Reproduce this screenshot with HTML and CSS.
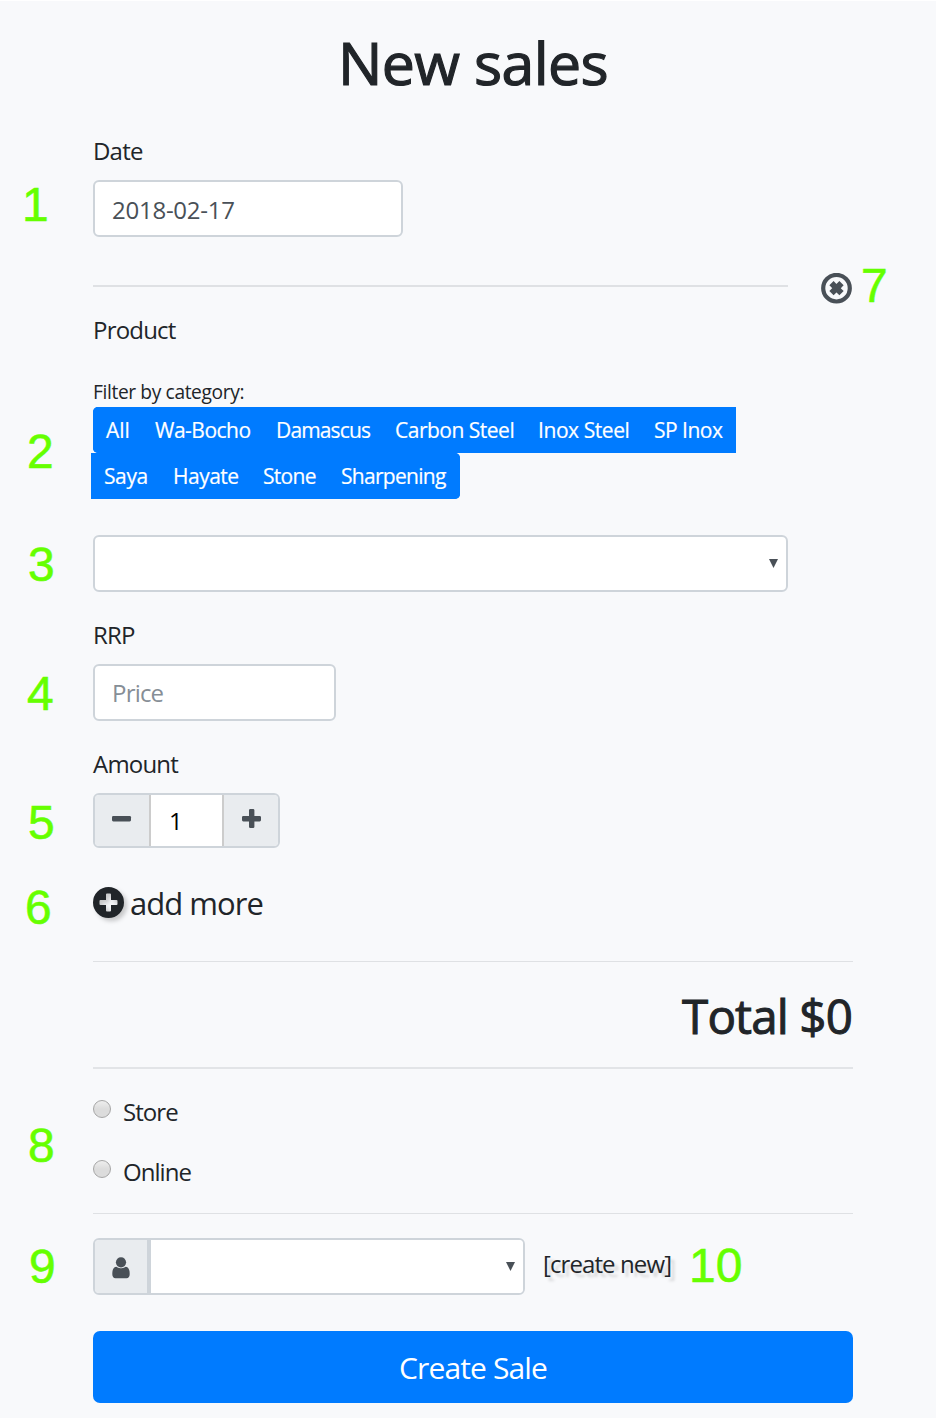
FILE: index.html
```
<!DOCTYPE html>
<html lang="en">
<head>
<meta charset="utf-8">
<title>New sales</title>
<link rel="stylesheet" href="styles.css">
</head>
<body>
<main class="page">
  <h1 class="title">New sales</h1>
  <section class="field date-field">
    <label class="label" for="date">Date</label>
    <input class="control date" id="date" type="text" value="2018-02-17">
    <span class="mark m1">1</span>
  </section>
  <section class="product">
    <div class="product-head">
      <hr class="rule-short">
      <svg class="remove" viewBox="0 0 32 32" role="img" aria-label="Remove"><circle cx="15.500" cy="15.200" r="13.300" fill="none" stroke="#495057" stroke-width="4.200"/><path d="M12.600 12.300L18.400 18.100M18.400 12.300L12.600 18.100" stroke="#495057" stroke-width="6" stroke-linecap="square"/></svg>
      <span class="mark m7">7</span>
    </div>
    <h2 class="label">Product</h2>
    <div class="filter-label">Filter by category:</div>
    <div class="filters">
      <div class="filter-row first"><button class="chip c1">All</button><button class="chip c2">Wa-Bocho</button><button class="chip c3">Damascus</button><button class="chip c4">Carbon Steel</button><button class="chip c5">Inox Steel</button><button class="chip c6">SP Inox</button></div>
      <div class="filter-row second"><button class="chip c7">Saya</button><button class="chip c8">Hayate</button><button class="chip c9">Stone</button><button class="chip c10">Sharpening</button></div>
      <span class="mark m2">2</span>
    </div>
    <div class="control select">
      <svg class="caret" viewBox="0 0 9 9"><path d="M0 0H9L4.500 9Z" fill="#495057"/></svg>
      <span class="mark m3">3</span>
    </div>
  </section>
  <section class="field price-field">
    <label class="label" for="price">RRP</label>
    <input class="control price" id="price" type="text" placeholder="Price">
    <span class="mark m4">4</span>
  </section>
  <section class="field amount-field">
    <label class="label" for="qty">Amount</label>
    <div class="stepper">
      <button class="addon" aria-label="Less"><svg class="sign" viewBox="0 0 20 20"><rect x="0" y="7" width="19" height="5.400" rx="1.300" fill="#495057"/></svg></button>
      <input class="qty" id="qty" type="text" value="1">
      <button class="addon plus" aria-label="More"><svg class="sign" viewBox="0 0 20 20"><path d="M8.300 0h2.800a1.300 1.300 0 0 1 1.300 1.300V7h5.300A1.300 1.300 0 0 1 19 8.300v2.800a1.300 1.300 0 0 1-1.300 1.300H12.400v5.300a1.300 1.300 0 0 1-1.300 1.300H8.300A1.300 1.300 0 0 1 7 17.700V12.400H1.300A1.300 1.300 0 0 1 0 11.100V8.300A1.300 1.300 0 0 1 1.300 7H7V1.300A1.300 1.300 0 0 1 8.300 0Z" fill="#495057"/></svg></button>
    </div>
    <span class="mark m5">5</span>
  </section>
  <div class="add-more">
    <svg class="add-icon" viewBox="0 0 31 31"><path fill-rule="evenodd" d="M15.500 0A15.500 15.500 0 1 1 15.500 31A15.500 15.500 0 1 1 15.500 0ZM14 6.500Q13 6.500 13 7.500V13H7.500Q6.500 13 6.500 14V17Q6.500 18 7.500 18H13V23.500Q13 24.500 14 24.500H17Q18 24.500 18 23.500V18H23.500Q24.500 18 24.500 17V14Q24.500 13 23.500 13H18V7.500Q18 6.500 17 6.500Z" fill="#212529"/></svg>
    <span class="add-text">add more</span>
    <span class="mark m6">6</span>
  </div>
  <div class="total">Total $0</div>
  <div class="channels">
    <label class="option"><span class="radio"></span>Store</label>
    <label class="option"><span class="radio"></span>Online</label>
    <span class="mark m8">8</span>
  </div>
  <div class="customer">
    <div class="customer-group">
      <span class="addon person"><svg class="user" viewBox="0 0 18 22"><path d="M4.200 9.800C1.200 10.200.300 13 .300 17c0 2.600 1 4.200 3.200 4.200h11c2.200 0 3.200-1.600 3.200-4.200 0-4-.900-6.800-3.900-7.200A7 7 0 0 1 9 11.200 7 7 0 0 1 4.200 9.800Z" fill="#495057"/><circle cx="9" cy="5.300" r="5.100" fill="#495057"/></svg></span>
      <div class="customer-select"><svg class="caret" viewBox="0 0 9 9"><path d="M0 0H9L4.500 9Z" fill="#495057"/></svg></div>
    </div>
    <a class="create-new">[create new]</a>
    <span class="mark m9">9</span>
    <span class="mark m10">10</span>
  </div>
  <button class="submit">Create Sale</button>
</main>
</body>
</html>
```
FILE: styles.css
```
* { box-sizing: border-box; }
body { margin: 0; background: #fff; color: #212529; font-family: "Open Sans", "Noto Sans", sans-serif; font-size: 24px; line-height: 36px; letter-spacing: -0.8px; }
button, input { font: inherit; color: inherit; letter-spacing: inherit; margin: 0; padding: 0; border: 0; }
.page { display: flex; flex-direction: column; width: 936px; height: 1417px; margin-top: 1px; padding: 0 83px 0 93px; background: #f8f9fb; }
.title { margin: 25px 0 1px; height: 72px; line-height: 72px; font-size: 59px; font-weight: 400; letter-spacing: -0.6px; text-align: center; -webkit-text-stroke: 1.2px #212529; }
.field { position: relative; display: flex; flex-direction: column; align-items: flex-start; }
.label { display: block; margin: 0; height: 36px; font-size: 24px; font-weight: 400; }
.control { height: 57px; border: 2px solid #ced4da; border-radius: 6px; background: #fff; color: #495057; }
.date-field { margin-top: 34px; gap: 11px; }
.date { width: 310px; padding: 1px 17px 0; letter-spacing: -0.25px; }
.product { margin-top: 36px; }
.product-head { position: relative; display: flex; height: 31px; margin-bottom: 8px; }
.rule-short { width: 695px; height: 2px; margin: 12px 33px 0 0; border: 0; background: #dfe1e4; }
.remove { width: 32px; height: 32px; }
.filter-label { margin: 30px 0 2px; height: 27px; line-height: 27px; font-size: 19.2px; letter-spacing: -0.38px; }
.filters { position: relative; height: 92px; }
.filter-row { display: flex; height: 46px; background: #007bff; overflow: hidden; }
.first { width: 643px; border-radius: 5px 0 0 5px; }
.second { width: 369px; margin-left: -2px; border-radius: 0 5px 5px 0; }
.chip { padding: 0 0 0 13px; background: #007bff; color: #fff; font-size: 21px; line-height: 46px; letter-spacing: -0.5px; text-align: left; white-space: nowrap; -webkit-text-stroke: 0.2px #fff; }
.c1 { width: 49px; letter-spacing: 0; }
.c2 { width: 121px; }
.c3 { width: 119px; letter-spacing: -0.85px; }
.c4 { width: 143px; }
.c5 { width: 116px; letter-spacing: -0.43px; }
.c6 { width: 94px; }
.c7 { width: 69px; letter-spacing: -0.4px; }
.c8 { width: 90px; letter-spacing: -0.5px; }
.c9 { width: 78px; letter-spacing: -0.7px; }
.c10 { width: 132px; letter-spacing: -0.7px; }
.select { position: relative; width: 695px; margin-top: 36px; display: flex; align-items: center; justify-content: flex-end; padding-right: 8px; }
.caret { width: 9px; height: 9px; }
.price-field { margin-top: 25px; gap: 11px; }
.price { width: 243px; padding: 0 17px; }
.price::placeholder { color: #868e96; opacity: 1; }
.amount-field { margin-top: 25px; gap: 11px; }
.stepper { display: flex; width: 187px; height: 55px; border: 2px solid #ced4da; border-radius: 6px; overflow: hidden; }
.addon { display: flex; align-items: center; justify-content: center; width: 54px; background: #e9ecef; }
.sign { width: 20px; height: 20px; margin-bottom: 3px; }
.plus { padding-left: 2px; }
.qty { width: 75px; padding-left: 18px; color: #000; background: #fff; border: solid #ccc; border-width: 0 2px; }
.add-more { position: relative; display: flex; height: 46px; margin-top: 33px; }
.add-icon { width: 31px; height: 31px; margin-top: 6px; overflow: visible; filter: drop-shadow(3px 3px 2px rgba(0,0,0,.2)); }
.add-text { margin-left: 6px; font-size: 31px; line-height: 44px; letter-spacing: -0.96px; }
.total { display: flex; justify-content: flex-end; height: 108px; margin-top: 34px; padding-right: 1px; border-top: 1px solid #dfe1e4; border-bottom: 2px solid #e2e4e7; font-size: 47.5px; line-height: 108px; letter-spacing: -0.85px; -webkit-text-stroke: 1px #212529; }
.channels { position: relative; display: flex; flex-direction: column; gap: 24px; padding-top: 25px; height: 145px; border-bottom: 1px solid #dfe1e4; }
.option { display: flex; height: 36px; letter-spacing: -0.95px; }
.radio { width: 18px; height: 18px; margin: 6px 12px 0 0; border: 1px solid #a6a6a6; border-radius: 50%; background: linear-gradient(#eee, #dcdcdc 50%); }
.customer { position: relative; display: flex; height: 57px; margin-top: 24px; }
.customer-group { display: flex; width: 432px; border: 2px solid #ced4da; border-radius: 6px; overflow: hidden; }
.person { width: 52px; }
.user { width: 18px; height: 22px; margin-top: 2px; }
.customer-select { display: flex; flex: 1; align-items: center; justify-content: flex-end; padding-right: 8px; border-left: 4px solid #ced4da; background: #fff; }
.create-new { margin-left: 18px; line-height: 51px; letter-spacing: -0.9px; text-shadow: 4px 4px 3px rgba(0,0,0,.15); }
.submit { width: 760px; height: 72px; margin-top: 36px; padding-top: 1px; border-radius: 7px; background: #007bff; color: #fff; font-size: 30px; letter-spacing: -0.87px; }
.mark { position: absolute; color: #6f0; font: 48px/54px "Liberation Sans", Arial, sans-serif; letter-spacing: 0; -webkit-text-stroke: 0.6px #6f0; }
.m1 { left: -71px; top: 45px; }
.m2 { left: -66px; top: 18px; }
.m3 { left: -67px; top: 1px; }
.m4 { left: -66px; top: 50px; }
.m5 { left: -65px; top: 50px; }
.m6 { left: -68px; top: 0; }
.m7 { left: 768px; top: -14px; }
.m8 { left: -65px; top: 50px; }
.m9 { left: -64px; top: 2px; }
.m10 { left: 596px; top: 1px; }
```
